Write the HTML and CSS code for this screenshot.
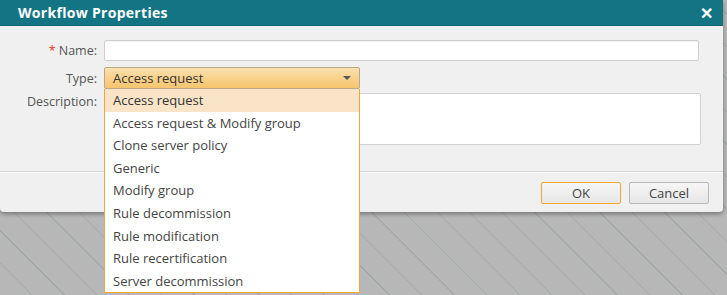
FILE: index.html
```html
<!DOCTYPE html>
<html lang="en">
<head>
    <meta charset="UTF-8">
    <title>Workflow Properties</title>
    <link rel="stylesheet" href="styles.css">
</head>
<body>
    <div class="dialog">
        <!-- Title bar -->
        <div class="titlebar">
            <span class="title">Workflow Properties</span>
            <span class="close">&#x2715;</span>
        </div>

        <!-- Form -->
        <div class="form">
            <div class="row row-name">
                <label class="label"><span class="req">*</span> Name:</label>
                <input class="input" type="text">
            </div>
            <div class="row row-type">
                <label class="label">Type:</label>
                <div class="select-wrap">
                    <div class="select">
                        <span>Access request</span>
                        <span class="arrow"></span>
                    </div>
                    <ul class="dropdown">
                        <li class="active">Access request</li>
                        <li>Access request &amp; Modify group</li>
                        <li>Clone server policy</li>
                        <li>Generic</li>
                        <li>Modify group</li>
                        <li>Rule decommission</li>
                        <li>Rule modification</li>
                        <li>Rule recertification</li>
                        <li>Server decommission</li>
                    </ul>
                </div>
            </div>
            <div class="row row-top">
                <label class="label">Description:</label>
                <textarea class="textarea"></textarea>
            </div>
        </div>

        <!-- Footer -->
        <div class="footer">
            <button class="btn btn-primary">OK</button>
            <button class="btn">Cancel</button>
        </div>
    </div>
</body>
</html>
```

FILE: styles.css
```css
* {
    margin: 0;
    padding: 0;
    box-sizing: border-box;
}

body {
    font-family: 'Open Sans', 'Noto Sans', sans-serif;
    font-size: 13px;
    color: #444;
    width: 727px;
    height: 295px;
    overflow: hidden;
    background-color: #b7b7b7;
    background-image: repeating-linear-gradient(45deg, #b7b7b7 0px, #b7b7b7 22px, #a4a9aa 22px, #a4a9aa 23px);
}

.dialog {
    width: 723px;
    background: #f0f0f0;
    border-radius: 0 0 4px 4px;
    box-shadow: 0 2px 4px rgba(0, 0, 0, 0.35);
}

.titlebar {
    height: 26px;
    background: #137583;
    border-bottom: 1px solid #0f6571;
    display: flex;
    align-items: center;
    justify-content: space-between;
    padding: 0 10px 0 18px;
    color: white;
}

.title {
    font-weight: bold;
    font-size: 14px;
    letter-spacing: 0.3px;
}

.close {
    font-size: 16px;
    font-weight: bold;
}

.form {
    padding: 14px 24px 0 0;
    height: 146px;
    border-bottom: 1px solid #d6d6d6;
}

.row {
    display: flex;
    align-items: center;
}

.row-name {
    margin-bottom: 6px;
}

.row-type {
    margin-bottom: 4px;
}

.row-top {
    align-items: flex-start;
}

.label {
    width: 104px;
    text-align: right;
    padding-right: 7px;
    font-size: 12.5px;
    color: #555;
}

.req {
    color: #e2401c;
}

.input {
    flex: 1;
    height: 21px;
    border: 1px solid #cfcfcf;
    border-radius: 2px;
    background: white;
    box-shadow: inset 0 1px 1px rgba(0, 0, 0, 0.06);
}

.select-wrap {
    position: relative;
    width: 256px;
}

.select {
    height: 22px;
    border: 1px solid #b9a98a;
    border-radius: 2px;
    background: linear-gradient(#fbe1ad, #f6c46d);
    display: flex;
    align-items: center;
    justify-content: space-between;
    padding: 0 8px;
    color: #333;
}

.arrow {
    width: 0;
    height: 0;
    border-left: 4px solid transparent;
    border-right: 4px solid transparent;
    border-top: 4px solid #555;
}

.dropdown {
    position: absolute;
    top: 22px;
    left: 0;
    width: 256px;
    list-style: none;
    background: white;
    border: 1px solid #f0a830;
    border-top: none;
    z-index: 10;
}

.dropdown li {
    height: 22.6px;
    line-height: 22.6px;
    padding-left: 8px;
    color: #444;
}

.dropdown li.active {
    background: #f9e4c8;
    color: #333;
}

.textarea {
    flex: 1;
    height: 52px;
    margin-right: -2px;
    border: 1px solid #d2d2d2;
    border-radius: 2px;
    background: white;
    resize: none;
}

.footer {
    display: flex;
    justify-content: flex-end;
    gap: 8px;
    padding: 9px 14px 8px 0;
    border-top: 1px solid #fafafa;
}

.btn {
    width: 80px;
    height: 22px;
    font-family: inherit;
    font-size: 13px;
    color: #444;
    border: 1px solid #b8b8b8;
    border-radius: 2px;
    background: linear-gradient(#f6f6f6, #e6e6e6);
}

.btn-primary {
    border-color: #f0a830;
}
```
